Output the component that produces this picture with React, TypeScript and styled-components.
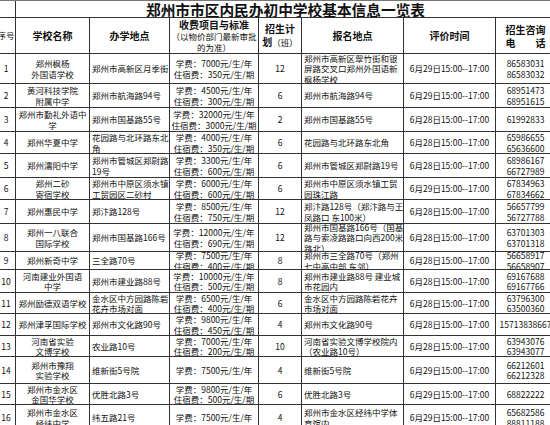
import styled, { createGlobalStyle } from "styled-components"

const GlobalStyle = createGlobalStyle`
    html, body {
        margin:0;
        padding:0;
        background:#fff;
        overflow:hidden;
    }
    body {
        width:550px;
        height:425px;
        font-family:"Noto Sans CJK SC", "Noto Sans", sans-serif;
        color:#111;
    }
`

const COLS = "19px 74px 80px 89px 43px 102px 92px 60px"

const Sheet = styled.div`
    margin-left:-3px;
    width:559px;
    border-top:1px solid #777;
`
const Row = styled.div<{ $h: number }>`
    display:grid;
    grid-template-columns:${COLS};
    height:${p => p.$h}px;
`
const Cell = styled.div<{ $left?: boolean }>`
    box-sizing:border-box;
    border-right:1px solid #333;
    border-bottom:1px solid #333;
    display:flex;
    flex-direction:column;
    justify-content:center;
    align-items:${p => (p.$left ? "flex-start" : "center")};
    text-align:${p => (p.$left ? "left" : "center")};
    padding:0 2px;
    overflow:hidden;
    font-size:8.5px;
    line-height:10.5px;
    white-space:nowrap;
`
const TitleCell = styled(Cell)`
    grid-column:2 / span 7;
    font-size:14.7px;
    line-height:17px;
    font-weight:700;
    color:#111;
`
const HeadCell = styled(Cell)`
    font-size:10px;
    line-height:13px;
    font-weight:700;
`
const Note = styled.span`
    font-size:8.5px;
    font-weight:400;
    line-height:11.5px;
`
const Line = styled.div`
    white-space:pre;
`

type School = {
    no: number
    h: number
    name: string[]
    addr: string[]
    fee: string[]
    plan: string
    reg: string[]
    time: string
    tel: string[]
}

const schools: School[] = [
    { no: 1, h: 30, name: ["郑州枫杨", "外国语学校"], addr: ["郑州市高新区月季街"], fee: ["学费：7000元/生/年", "住宿费：350元/生/期"], plan: "12", reg: ["郑州市高新区翠竹街和银", "屏路交叉口郑州外国语新", "枫杨学校"], time: "6月29日15:00--17:00", tel: ["86583031", "86583032"] },
    { no: 2, h: 24, name: ["黄河科技学院", "附属中学"], addr: ["郑州市航海路94号"], fee: ["学费：4500元/生/年", "住宿费：300元/生/期"], plan: "6", reg: ["郑州市航海路94号"], time: "6月29日15:00--17:00", tel: ["68951473", "68951615"] },
    { no: 3, h: 24, name: ["郑州市勤礼外语中", "学"], addr: ["郑州市国基路55号"], fee: ["学费：32000元/生/年", "住宿费：3000元/生/期"], plan: "2", reg: ["郑州市国基路55号"], time: "6月28日15:00--17:00", tel: ["61992833"] },
    { no: 4, h: 22, name: ["郑州华夏中学"], addr: ["花园路与北环路东北", "角"], fee: ["学费：4000元/生/年", "住宿费：350元/生/期"], plan: "6", reg: ["花园路与北环路东北角"], time: "6月28日15:00--17:00", tel: ["65986655", "65636600"] },
    { no: 5, h: 24, name: ["郑州濡阳中学"], addr: ["郑州市管城区郑尉路", "19号"], fee: ["学费：3300元/生/年", "住宿费：600元/生/期"], plan: "6", reg: ["郑州市管城区郑尉路19号"], time: "6月28日15:00--17:00", tel: ["68986167", "66727989"] },
    { no: 6, h: 22, name: ["郑州二砂", "寄宿学校"], addr: ["郑州市中原区须水镇", "工贸园区二砂村"], fee: ["学费：6000元/生/年", "住宿费：600元/生/期"], plan: "6", reg: ["郑州市中原区须水镇工贸", "园珠江路"], time: "6月29日15:00--17:00", tel: ["67834963", "67834662"] },
    { no: 7, h: 24, name: ["郑州惠民中学"], addr: ["郑汴路128号"], fee: ["学费：8500元/生/年", "住宿费：750元/生/期"], plan: "12", reg: ["郑汴路128号（郑汴路与王", "凤路口 东100米）"], time: "6月28日15:00--17:00", tel: ["56657799", "56727788"] },
    { no: 8, h: 28, name: ["郑州一八联合", "国际学校"], addr: ["郑州市国基路166号"], fee: ["学费：12000元/生/年", "住宿费：690元/生/期"], plan: "12", reg: ["郑州市国基路166号（国基", "路与索凌路路口向西200米", "路北）"], time: "6月28日15:00--17:00", tel: ["63701303", "63701318"] },
    { no: 9, h: 18, name: ["郑州新奇中学"], addr: ["三全路70号"], fee: ["学费：7500元/生/年", "住宿费：400元/生/期"], plan: "8", reg: ["郑州市三全路70号（郑州", "七中高中部 东邻）"], time: "6月28日15:00--17:00", tel: ["56658917", "56658907"] },
    { no: 10, h: 23, name: ["河南建业外国语", "中学"], addr: ["郑州市建业路88号"], fee: ["学费：10000元/生/年", "住宿费：500元/生/期"], plan: "8", reg: ["郑州市建业路88号 建业城", "市花园内"], time: "6月28日15:00--17:00", tel: ["69167688", "69167766"] },
    { no: 11, h: 21, name: ["郑州励德双语学校"], addr: ["金水区中方园路陈砦", "花卉市场对面"], fee: ["学费：6500元/生/年", "住宿费：400元/生/期"], plan: "6", reg: ["金水区中方园路陈砦花卉", "市场对面"], time: "6月28日15:00--17:00", tel: ["63796300", "63500360"] },
    { no: 12, h: 22, name: ["郑州津孚国际学校"], addr: ["郑州市文化路90号"], fee: ["学费：9800元/生/年", "住宿费：450元/生/期"], plan: "4", reg: ["郑州市文化路90号"], time: "6月28日15:00--17:00", tel: ["15713838667"] },
    { no: 13, h: 21, name: ["河南省实验", "文博学校"], addr: ["农业路10号"], fee: ["学费：7000元/生/年", "住宿费：200元/生/期"], plan: "10", reg: ["河南省实验文博学校院内", "（农业路10号）"], time: "6月28日15:00--17:00", tel: ["63943076", "63943077"] },
    { no: 14, h: 27, name: ["郑州市豫翔", "实验学校"], addr: ["维新街5号院"], fee: ["学费：7500元/生/年"], plan: "4", reg: ["维新街5号院"], time: "6月29日15:00--17:00", tel: ["66212601", "66212328"] },
    { no: 15, h: 21, name: ["郑州市金水区", "金国华学校"], addr: ["优胜北路3号"], fee: ["学费：9800元/生/年", "住宿费：500元/生/期"], plan: "6", reg: ["优胜北路3号"], time: "6月29日15:00--17:00", tel: ["68822222"] },
    { no: 16, h: 26, name: ["郑州市金水区", "经纬中学"], addr: ["纬五路21号"], fee: ["学费：7500元/生/年"], plan: "4", reg: ["郑州市金水区经纬中学体", "育馆内"], time: "6月29日15:00--17:00", tel: ["65682586", "88811188"] },
]

const lines = (list: string[]) => list.map((t, i) => <Line key={i}>{t}</Line>)

export default function App() {
    return (
        <>
            <GlobalStyle />
            <Sheet>
                <Row $h={17}>
                    <Cell />
                    <TitleCell>郑州市市区内民办初中学校基本信息一览表</TitleCell>
                </Row>
                <Row $h={36}>
                    <Cell>序号</Cell>
                    <HeadCell>学校名称</HeadCell>
                    <HeadCell>办学地点</HeadCell>
                    <HeadCell>
                        <Line>收费项目与标准</Line>
                        <Note>（以物价部门最新审批</Note>
                        <Note>的为准）</Note>
                    </HeadCell>
                    <HeadCell>
                        <Line>招生计</Line>
                        <Line>划<Note>（班）</Note></Line>
                    </HeadCell>
                    <HeadCell>报名地点</HeadCell>
                    <HeadCell>评价时间</HeadCell>
                    <HeadCell>
                        <Line>招生咨询</Line>
                        <Line>电{"\u3000\u3000"}话</Line>
                    </HeadCell>
                </Row>
                {schools.map(s => (
                    <Row key={s.no} $h={s.h}>
                        <Cell>{s.no}</Cell>
                        <Cell>{lines(s.name)}</Cell>
                        <Cell $left>{lines(s.addr)}</Cell>
                        <Cell>{lines(s.fee)}</Cell>
                        <Cell>{s.plan}</Cell>
                        <Cell $left>{lines(s.reg)}</Cell>
                        <Cell>{s.time}</Cell>
                        <Cell>{lines(s.tel)}</Cell>
                    </Row>
                ))}
            </Sheet>
        </>
    )
}
